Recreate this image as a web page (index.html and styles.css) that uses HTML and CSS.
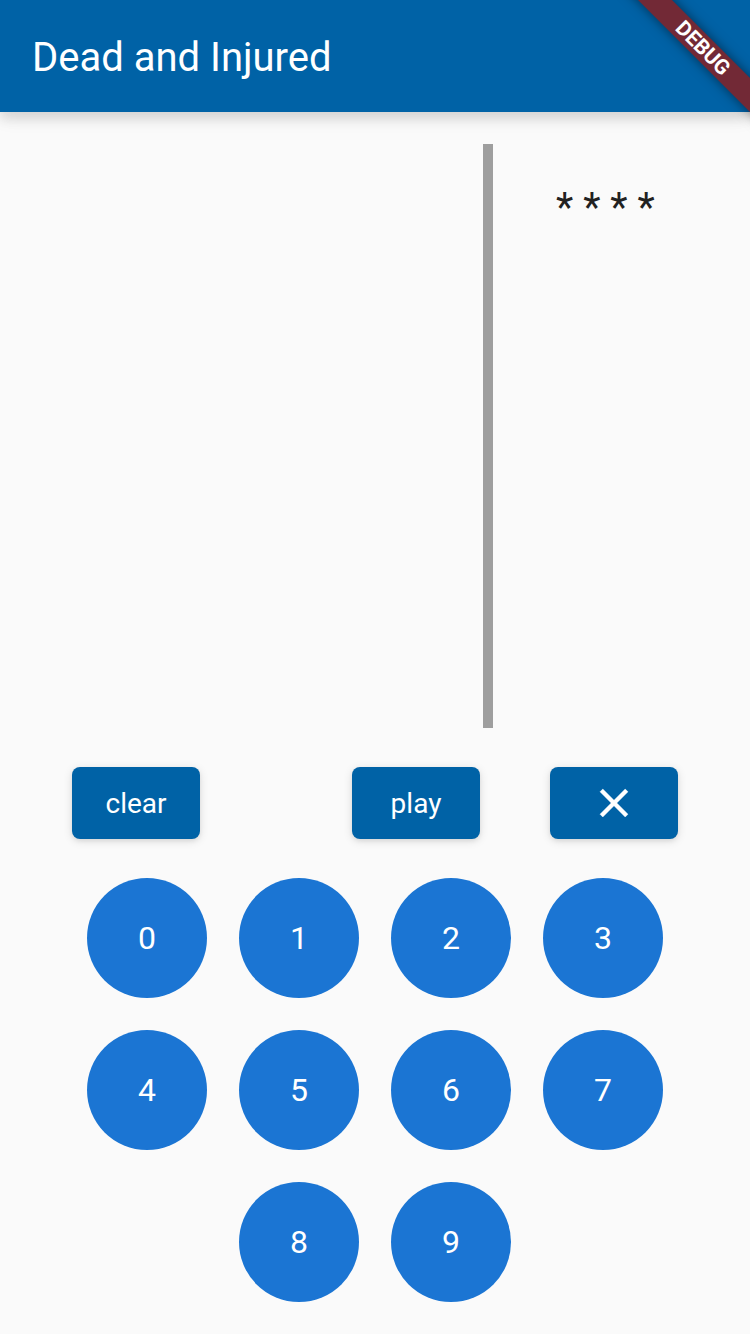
FILE: index.html
```html
<!DOCTYPE html>
<html lang="en">
<head>
<meta charset="utf-8">
<meta name="viewport" content="width=device-width, initial-scale=1">
<title>Dead and Injured</title>
<link rel="stylesheet" href="styles.css">
</head>
<body>
<div class="app">
  <header class="app-bar">
    <h1 class="title">Dead and Injured</h1>
  </header>
  <main class="game">
    <section class="board">
      <div class="guesses"></div>
      <div class="divider"></div>
      <p class="secret">* * * *</p>
    </section>
    <div class="actions">
      <button class="action" type="button">clear</button>
      <button class="action" type="button">play</button>
      <button class="action" type="button" aria-label="Delete">
        <svg class="icon" viewBox="0 0 24 24" aria-hidden="true"><path d="M19 6.41L17.59 5 12 10.59 6.41 5 5 6.41 10.59 12 5 17.59 6.41 19 12 13.41 17.59 19 19 17.59 13.41 12z"/></svg>
      </button>
    </div>
    <div class="keypad">
      <button class="key" type="button">0</button>
      <button class="key" type="button">1</button>
      <button class="key" type="button">2</button>
      <button class="key" type="button">3</button>
      <button class="key" type="button">4</button>
      <button class="key" type="button">5</button>
      <button class="key" type="button">6</button>
      <button class="key" type="button">7</button>
      <button class="key" type="button">8</button>
      <button class="key" type="button">9</button>
    </div>
  </main>
  <div class="banner"><span class="ribbon">DEBUG</span></div>
</div>
</body>
</html>
```

FILE: styles.css
```css
* {
  box-sizing: border-box;
}

body {
  margin: 0;
  background: #fafafa;
  color: #212121;
  font-family: Roboto, "Liberation Sans", sans-serif;
}

.app {
  position: relative;
  display: flex;
  flex-direction: column;
  min-height: 100vh;
}

.app-bar {
  display: flex;
  align-items: center;
  height: 112px;
  padding: 4px 32px 0;
  background: #0062a6;
  color: #fff;
  box-shadow: 0 2px 20px rgba(0, 0, 0, 0.12), 0 8px 10px rgba(0, 0, 0, 0.08);
}

.title {
  margin: 0;
  font-size: 40px;
  font-weight: 400;
  line-height: 48px;
}

.game {
  flex: 1;
  display: flex;
  flex-direction: column;
}

.board {
  flex: 1;
  display: grid;
  grid-template-columns: 2fr 10px 1fr;
  padding: 32px;
}

.divider {
  background: #9e9e9e;
}

.secret {
  margin: 0;
  padding-top: 40px;
  font-size: 40px;
  line-height: 48px;
  text-align: center;
}

.actions {
  display: grid;
  grid-template-columns: 280fr 198fr 128px;
  padding: 7px 72px 39px;
}

.action {
  display: flex;
  align-items: center;
  justify-content: center;
  width: 128px;
  height: 72px;
  padding: 0;
  border: 0;
  border-radius: 8px;
  background: #0062a6;
  color: #fff;
  font: 400 28px/33px Roboto, "Liberation Sans", sans-serif;
  box-shadow: 0 2px 4px rgba(0, 0, 0, 0.06), 0 2px 10px rgba(0, 0, 0, 0.12);
}

.icon {
  width: 48px;
  height: 48px;
  fill: currentColor;
  stroke: currentColor;
  stroke-width: 0.2;
}

.keypad {
  display: flex;
  flex-wrap: wrap;
  justify-content: center;
  gap: 32px;
  padding: 0 72px 32px;
}

.key {
  width: 120px;
  height: 120px;
  padding: 0;
  border: 0;
  border-radius: 50%;
  background: #1b75d3;
  color: #fff;
  font: 400 32px/40px Roboto, "Liberation Sans", sans-serif;
}

/* Corner ribbon laid over the app bar */
.banner {
  position: absolute;
  top: 0;
  right: 0;
  width: 160px;
  height: 160px;
  overflow: hidden;
  pointer-events: none;
}

.ribbon {
  position: absolute;
  top: 36px;
  right: -53px;
  width: 200px;
  height: 24px;
  background: #722936;
  color: #fff;
  font-size: 21px;
  font-weight: 700;
  line-height: 24px;
  text-align: center;
  transform: rotate(45deg);
  box-shadow: 0 0 12px rgba(0, 0, 0, 0.5);
}
```
